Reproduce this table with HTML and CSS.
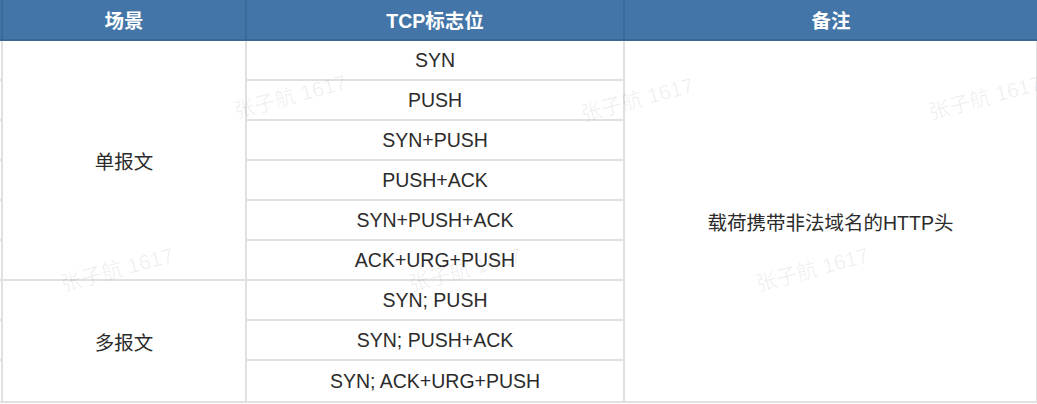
FILE: index.html
```html
<!DOCTYPE html>
<html lang="zh">
<head>
<meta charset="utf-8">
<link rel="stylesheet" href="styles.css">
</head>
<body>
<div class="wrap">
  <table class="grid">
    <colgroup>
      <col class="c-edge">
      <col class="c-scene">
      <col class="c-flag">
      <col class="c-note">
    </colgroup>
    <thead>
      <tr>
        <th class="edge-h"></th>
        <th>场景</th>
        <th>TCP标志位</th>
        <th>备注</th>
      </tr>
    </thead>
    <tbody>
      <tr>
        <td class="edge"></td>
        <td rowspan="6">单报文</td>
        <td>SYN</td>
        <td rowspan="9" class="note">载荷携带非法域名的HTTP头</td>
      </tr>
      <tr><td class="edge"></td><td>PUSH</td></tr>
      <tr><td class="edge"></td><td>SYN+PUSH</td></tr>
      <tr><td class="edge"></td><td>PUSH+ACK</td></tr>
      <tr><td class="edge"></td><td>SYN+PUSH+ACK</td></tr>
      <tr><td class="edge"></td><td>ACK+URG+PUSH</td></tr>
      <tr>
        <td class="edge"></td>
        <td rowspan="3">多报文</td>
        <td>SYN; PUSH</td>
      </tr>
      <tr><td class="edge"></td><td>SYN; PUSH+ACK</td></tr>
      <tr><td class="edge"></td><td class="last">SYN; ACK+URG+PUSH</td></tr>
    </tbody>
  </table>
  <div class="marks">
    <span class="wm" style="left:232px;top:80px">张子航 1617</span>
    <span class="wm" style="left:579px;top:83px">张子航 1617</span>
    <span class="wm" style="left:927px;top:81px">张子航 1617</span>
    <span class="wm" style="left:59px;top:253px">张子航 1617</span>
    <span class="wm" style="left:407px;top:253px">张子航 1617</span>
    <span class="wm" style="left:754px;top:253px">张子航 1617</span>
  </div>
</div>
</body>
</html>
```

FILE: styles.css
```css
html, body {
  margin: 0;
  padding: 0;
  background: #ffffff;
}

body {
  font-family: "Liberation Sans", Arial, "Noto Sans CJK SC", sans-serif;
  color: #2b2b2b;
  overflow: hidden;
}

.wrap {
  position: relative;
  width: 1037px;
  height: 404px;
  overflow: hidden;
}

.grid {
  border-collapse: collapse;
  table-layout: fixed;
  width: 1037px;
  font-size: 19.5px;
}

.c-edge { width: 2px; }
.c-scene { width: 244px; }
.c-flag { width: 378px; }
.c-note { width: 413px; }

.grid th {
  height: 40px;
  padding: 0;
  background: #4375a8;
  color: #ffffff;
  font-weight: bold;
  font-size: 19.5px;
  text-align: center;
  vertical-align: middle;
  border-left: 2px solid #3b6a9a;
  border-bottom: 2px solid #3a6895;
  box-sizing: border-box;
}

.grid th.edge-h {
  border-left: none;
}

.grid td {
  height: 40px;
  padding: 0;
  text-align: center;
  vertical-align: middle;
  border: 2px solid #e1e1e1;
  box-sizing: border-box;
  white-space: nowrap;
}

.grid td.last {
  height: 42px;
}

.grid td.edge {
  border-left: none;
  border-top: none;
}

.grid td.note {
  border-right: 2px solid #e1e1e1;
}

.marks {
  position: absolute;
  inset: 0;
  pointer-events: none;
}

.wm {
  position: absolute;
  font-family: "Liberation Sans", Arial, "Noto Sans CJK SC", sans-serif;
  font-size: 21px;
  color: rgba(0, 0, 0, 0.065);
  white-space: nowrap;
  transform: rotate(-15deg);
  transform-origin: center;
}
```
